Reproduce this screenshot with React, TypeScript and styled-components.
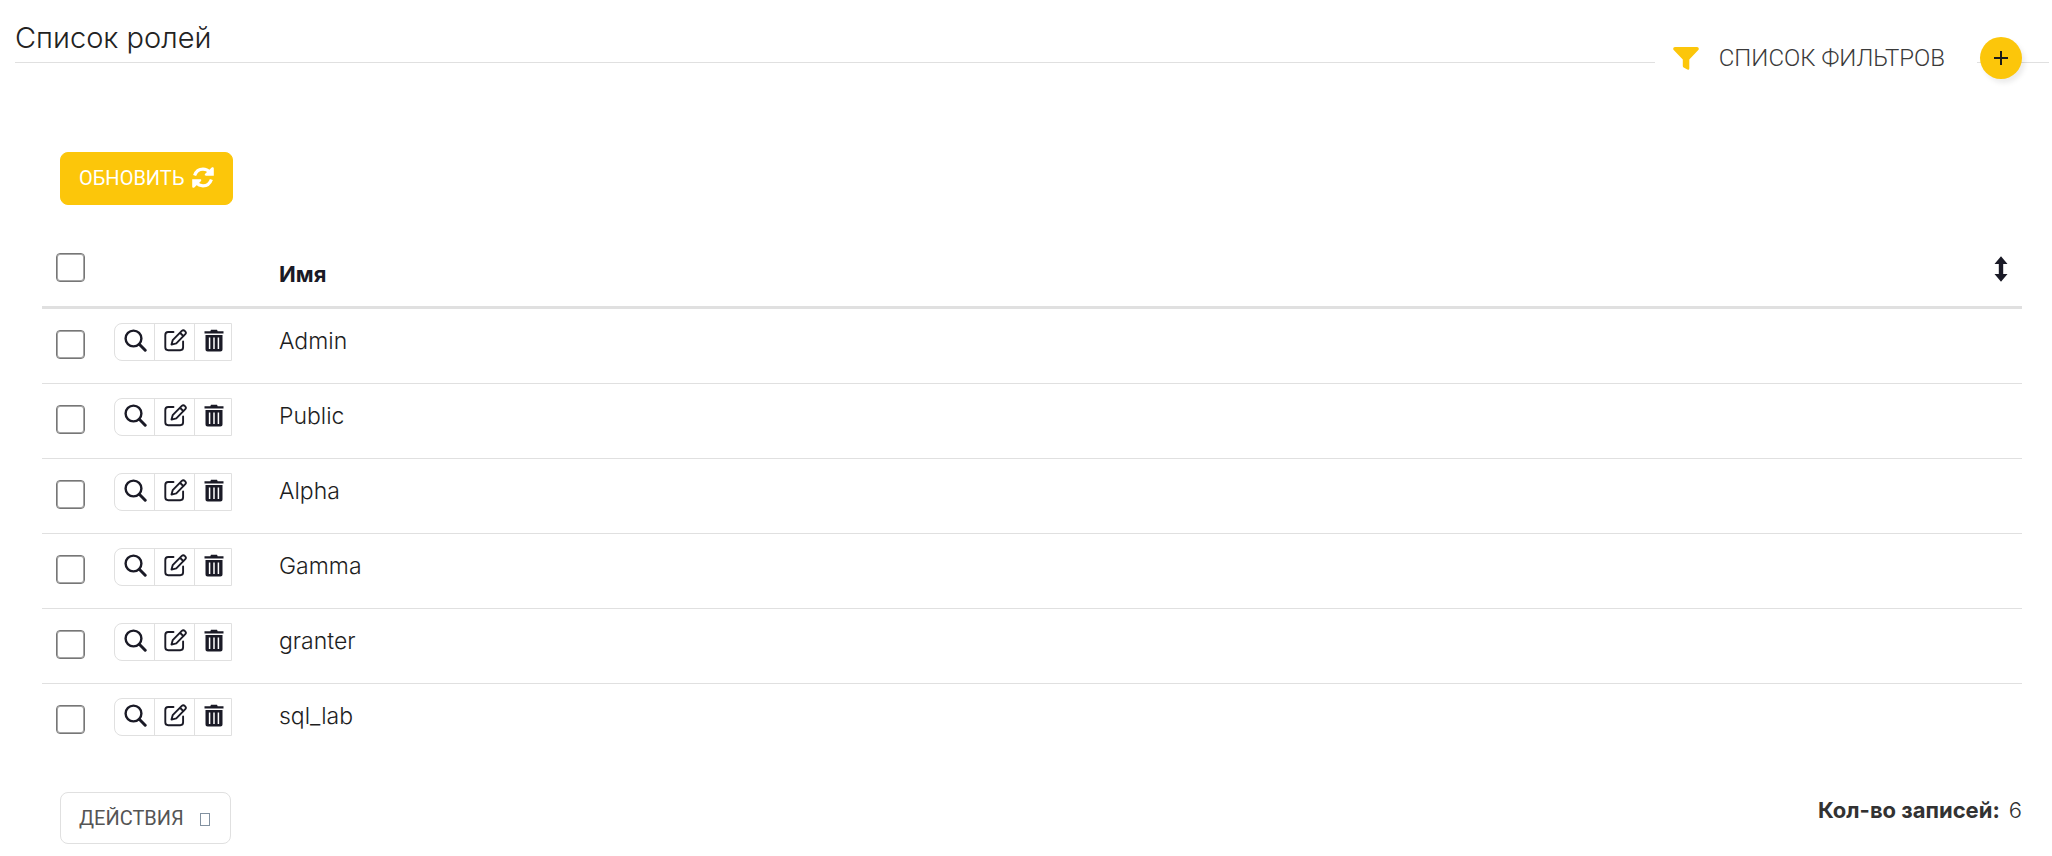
import React from 'react';
import styled, { createGlobalStyle } from 'styled-components';

const Global = createGlobalStyle`
  *, *::before, *::after { box-sizing: border-box; }
  body { margin: 0; background: #fff; color: #323232; font-family: Inter, "Liberation Sans", sans-serif; font-size: 22px; line-height: 30px; }
`;

const Page = styled.main`
  padding: 16px 3px 0 15px;
`;

const Header = styled.header`
  display: flex;
  justify-content: space-between;
  height: 47px;
  border-bottom: 1px solid #e0e0e0;
`;

const Title = styled.h1`
  margin: 0;
  color: #222;
  font-size: 29px;
  line-height: 44px;
  font-weight: 300;
`;

const HeaderActions = styled.div`
  display: flex;
  align-items: center;
  gap: 3px;
  height: 84px;
  padding-right: 27px;
`;

const FilterButton = styled.button`
  display: flex;
  align-items: center;
  gap: 20px;
  height: 50px;
  padding: 0 32px 0 18px;
  border: 0;
  background: #fff;
  color: #3a3a3a;
  font: 300 24px/30px Roboto, sans-serif;
  text-transform: uppercase;
  cursor: pointer;
`;

const AddLink = styled.a`
  display: flex;
  align-items: center;
  justify-content: center;
  width: 42px;
  height: 42px;
  border-radius: 50%;
  background: #fcc60a;
  color: #1a1a1a;
  box-shadow: 3px 4px 5px rgba(0, 0, 0, 0.08);
`;

const Panel = styled.section`
  padding: 89px 27px 12px;
`;

const Button = styled.button<{ $primary?: boolean }>`
  display: flex;
  align-items: center;
  gap: ${(p) => (p.$primary ? 8 : 16)}px;
  height: ${(p) => (p.$primary ? 53 : 52)}px;
  margin-left: 18px;
  padding: 0 ${(p) => (p.$primary ? 18 : 20)}px ${(p) => (p.$primary ? 2 : 0)}px 18px;
  border: 1px solid ${(p) => (p.$primary ? '#fcc60a' : '#e0e0e0')};
  border-radius: 8px;
  background: ${(p) => (p.$primary ? '#fcc60a' : '#fff')};
  color: ${(p) => (p.$primary ? '#fff' : '#555')};
  font: 400 20px/30px Roboto, sans-serif;
  text-transform: uppercase;
  cursor: pointer;
`;

const Table = styled.table`
  width: 100%;
  margin-top: 36px;
  border-collapse: separate;
  border-spacing: 0;
  table-layout: fixed;
`;

const HeadCell = styled.th<{ $width?: number }>`
  width: ${(p) => (p.$width ? `${p.$width}px` : 'auto')};
  height: 68px;
  padding: 12px 14px;
  border-bottom: 3px solid #e0e0e0;
  color: #1a1a26;
  font-weight: 700;
  text-align: left;
  vertical-align: top;
`;

const HeadContent = styled.div`
  display: flex;
  justify-content: space-between;
  padding-top: 3px;
  line-height: 36px;
`;

const SortButton = styled.button`
  display: flex;
  height: 26px;
  padding: 0;
  border: 0;
  background: none;
  color: #1a1a26;
  cursor: pointer;
`;

const Row = styled.tr`
  &:not(:last-child) td { border-bottom: 1px solid #e0e0e0; }
`;

const Cell = styled.td`
  height: 75px;
  padding: 14px 14px 0;
  vertical-align: top;
`;

const CheckCell = styled(Cell)`
  padding-top: 21px;
`;

const NameCell = styled(Cell)`
  padding-top: 17px;
  color: #1e1e1e;
  font-size: 23px;
  font-weight: 300;
`;

const Checkbox = styled.input.attrs({ type: 'checkbox' })`
  display: block;
  appearance: none;
  width: 29px;
  height: 29px;
  margin: 0;
  border: 1px solid #767676;
  border-radius: 4px;
  background: #fff;
  box-shadow: inset 0 0 0 1px #a5a5a5;
  &:checked { background: #fcc60a; }
`;

const ButtonGroup = styled.div`
  display: inline-flex;
  height: 38px;
  border: 1px solid #e0e0e0;
  border-radius: 8px 0 0 8px;
  vertical-align: top;
`;

const RowLink = styled.a`
  display: flex;
  justify-content: center;
  width: 40px;
  padding: 5px 0 0 1px;
  color: #1a1a26;
  &:not(:first-child) { border-left: 1px solid #e0e0e0; }
  &:first-child { width: 39px; }
  &:last-child { width: 37px; }
`;

const Footer = styled.footer`
  display: flex;
  justify-content: space-between;
  margin-top: 33px;
`;

const Count = styled.p`
  display: flex;
  gap: 9px;
  margin: 3px 0 0;
  font-weight: 300;
`;

const CountLabel = styled.strong`
  font-weight: 700;
`;

const MissingGlyph = styled.span`
  width: 10px;
  height: 13px;
  margin-top: 3px;
  border: 1px solid #8291a0;
`;

const FilterIcon = () => (
  <svg width="26" height="23" viewBox="0 0 26 23" fill="#fcc60a" aria-hidden="true">
    <path d="M2 0h22c1.600 0 2.400 1.900 1.300 3.100L16.300 12.600V21.200c0 1.200-1 1.900-2 1.400l-3.600-2.100c-.6-.4-.9-.9-.9-1.600v-6.300L.7 3.100C-.4 1.900.4 0 2 0z" />
  </svg>
);

const PlusIcon = () => (
  <svg width="16" height="16" viewBox="0 0 16 16" stroke="currentColor" strokeWidth="2" aria-hidden="true">
    <path d="M8 1v14M1 8h14" />
  </svg>
);

const RefreshIcon = () => (
  <svg width="22" height="21" viewBox="0 0 22 21" fill="none" aria-hidden="true">
    <path d="M2.600 8.500C4 4.500 7 2.200 11 2.200c2.800 0 5 1.100 6.600 3M19.400 12.500c-1.400 4-4.400 6.300-8.400 6.300-2.800 0-5-1.100-6.600-3" stroke="currentColor" strokeWidth="3.200" />
    <path d="M21.800 1.500v7.300h-8c-1.300 0-1.300-1.300-.6-2l6.500-6.300c.8-.7 2.100-.3 2.100 1zM.2 19.500v-7.300h8c1.300 0 1.300 1.300.6 2l-6.500 6.300c-.8.7-2.100.3-2.100-1z" fill="currentColor" />
  </svg>
);

const SearchIcon = () => (
  <svg width="23" height="23" viewBox="0 0 23 23" fill="none" stroke="currentColor" aria-hidden="true">
    <circle cx="9.500" cy="9.500" r="7.900" strokeWidth="2.400" />
    <path d="M15.300 15.300l5.900 5.900" strokeWidth="3" strokeLinecap="round" />
  </svg>
);

const EditIcon = () => (
  <svg width="23" height="23" viewBox="0 0 23 23" fill="none" stroke="currentColor" strokeWidth="1.900" strokeLinecap="round" strokeLinejoin="round" aria-hidden="true">
    <path d="M9.500 3H4.200C2.400 3 1.300 4.100 1.300 5.900v12.400c0 1.800 1.100 2.900 2.900 2.900h12c1.800 0 2.900-1.100 2.900-2.900v-5.800" />
    <path d="M8.700 11.200 17.800 1.900c2-1.900 5.300 1.300 3.500 3.300L12.300 14.300 7.500 15.600zM16 3.800l3.500 3.400" />
  </svg>
);

const TrashIcon = () => (
  <svg width="20" height="23" viewBox="0 0 20 23" aria-hidden="true">
    <path d="M.5 2.200h5.800L7 .7h6l.7 1.500h5.800v2.400H.5zM1.500 6h17v14.300c0 1.400-.8 2.200-2.200 2.200H3.700c-1.400 0-2.200-.8-2.200-2.200z" fill="currentColor" />
    <path d="M5.600 8.500V20M10 8.500V20M14.400 8.500V20" stroke="#fff" strokeWidth="1.500" />
  </svg>
);

const SortIcon = () => (
  <svg width="14" height="26" viewBox="0 0 14 26" fill="currentColor" aria-hidden="true">
    <path d="M7 .3 13.500 8H9.200v10h4.300L7 25.700.5 18h4.300V8H.5z" />
  </svg>
);

const roles = ['Admin', 'Public', 'Alpha', 'Gamma', 'granter', 'sql_lab'];

export default function App() {
  return (
    <>
      <Global />
      <Page>
        <Header>
          <Title>Список ролей</Title>
          <HeaderActions>
            <FilterButton type="button"><FilterIcon />Список фильтров</FilterButton>
            <AddLink href="#add" aria-label="Добавить"><PlusIcon /></AddLink>
          </HeaderActions>
        </Header>
        <Panel>
          <Button type="button" $primary>Обновить<RefreshIcon /></Button>
          <Table>
            <thead>
              <tr>
                <HeadCell $width={58}><Checkbox aria-label="Выбрать все" /></HeadCell>
                <HeadCell $width={165} />
                <HeadCell>
                  <HeadContent>
                    Имя
                    <SortButton type="button" aria-label="Сортировать"><SortIcon /></SortButton>
                  </HeadContent>
                </HeadCell>
              </tr>
            </thead>
            <tbody>
              {roles.map((role) => (
                <Row key={role}>
                  <CheckCell><Checkbox aria-label={role} /></CheckCell>
                  <Cell>
                    <ButtonGroup>
                      <RowLink href="#show" aria-label="Показать"><SearchIcon /></RowLink>
                      <RowLink href="#edit" aria-label="Изменить"><EditIcon /></RowLink>
                      <RowLink href="#delete" aria-label="Удалить"><TrashIcon /></RowLink>
                    </ButtonGroup>
                  </Cell>
                  <NameCell>{role}</NameCell>
                </Row>
              ))}
            </tbody>
          </Table>
          <Footer>
            <Button type="button">Действия<MissingGlyph /></Button>
            <Count><CountLabel>Кол-во записей:</CountLabel> 6</Count>
          </Footer>
        </Panel>
      </Page>
    </>
  );
}
